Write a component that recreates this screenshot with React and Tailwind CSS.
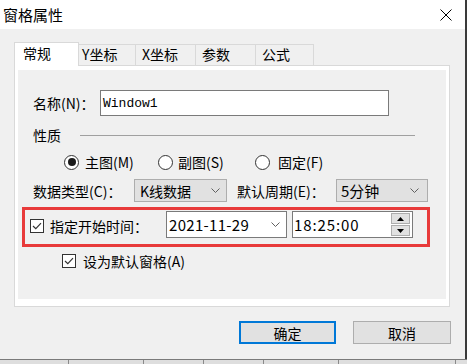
import React from 'react';

// Small drawn controls used by the dialog
const Chevron = () => (
  <svg width="9" height="5" viewBox="0 0 9 5">
    <polyline points="0.5,0.5 4.5,4.5 8.5,0.5" fill="none" stroke="#606060" strokeWidth="1" />
  </svg>
);

const Radio = ({ checked }) => (
  <span className="w-[15px] h-[15px] shrink-0 rounded-full border border-[#333333] bg-white flex items-center justify-center">
    {checked && <span className="w-[8px] h-[8px] rounded-full bg-[#1a1a1a]" />}
  </span>
);

const CheckBox = () => (
  <span className="w-[14px] h-[14px] shrink-0 border border-[#333333] bg-white flex items-center justify-center">
    <svg width="10" height="8" viewBox="0 0 10 8">
      <polyline points="1,4 3.8,6.6 9,1.2" fill="none" stroke="#333333" strokeWidth="1.2" />
    </svg>
  </span>
);

const tabs = [
  { label: '常规', cls: 'w-[65px] h-[24px] -mb-px border-l border-t border-r bg-white pl-[8px] pt-[3px] relative z-10' },
  { label: 'Y坐标', cls: 'w-[57px] h-[21px] border-t border-r pl-[3px] pt-[2px]' },
  { label: 'X坐标', cls: 'w-[60px] h-[21px] border-t border-r pl-[6px] pt-[2px]' },
  { label: '参数', cls: 'w-[60px] h-[21px] border-t border-r pl-[6px] pt-[2px]' },
  { label: '公式', cls: 'w-[58px] h-[21px] border-t border-r pl-[6px] pt-[2px]' },
];

export default function App() {
  return (
    <div className="w-[467px] h-[364px] overflow-hidden flex flex-col text-[14px] text-black leading-none font-['Noto_Sans_CJK_SC',sans-serif]">
      <div className="flex h-[359px]">
        <div className="w-[465px] flex flex-col">
          {/* Title bar */}
          <div className="h-[29px] bg-white flex items-center justify-between pl-[3px] pr-[13px]">
            <span className="text-[15px]">窗格属性</span>
            <svg width="12" height="12" viewBox="0 0 12 12">
              <path d="M0.5 0.5 L11.5 11.5 M11.5 0.5 L0.5 11.5" stroke="#000" strokeWidth="1" />
            </svg>
          </div>

          <div className="flex-1 bg-[#f0f0f0] pt-[13px]">
            {/* Tabs */}
            <div className="ml-[14px] h-[23px] flex items-end">
              {tabs.map((t) => (
                <div key={t.label} className={`${t.cls} border-[#d9d9d9] text-[14px]`}>
                  {t.label}
                </div>
              ))}
            </div>

            {/* Tab page */}
            <div className="ml-[14px] w-[436px] h-[242px] border border-[#d9d9d9] bg-white pt-[4px] px-[3px] pb-[7px]">
              <div className="h-full bg-[#f0f0f0]">
                <div className="h-[20px]" />

                <div className="flex items-center h-[26px] pl-[15px]">
                  <span className="w-[67px]">名称(N)：</span>
                  <div className="w-[289px] h-[26px] bg-white border border-[#7a7a7a] flex items-center pl-[2px]">
                    <span className="font-['Liberation_Mono',monospace] text-[13px]">Window1</span>
                  </div>
                </div>

                <div className="flex items-center h-[20px] mt-[9px] pl-[15px]">
                  <span className="w-[47px]">性质</span>
                  <div className="w-[335px] h-px bg-[#a0a0a0]" />
                </div>

                <div className="flex items-center h-[20px] mt-[7px] pl-[46px]">
                  <div className="w-[94px] flex items-center gap-[6px]">
                    <Radio checked />
                    <span>主图(M)</span>
                  </div>
                  <div className="w-[97px] flex items-center gap-[5px]">
                    <Radio />
                    <span>副图(S)</span>
                  </div>
                  <div className="flex items-center gap-[8px]">
                    <Radio />
                    <span>固定(F)</span>
                  </div>
                </div>

                <div className="flex items-center h-[23px] mt-[7px] pl-[15px]">
                  <span className="w-[101px]">数据类型(C)：</span>
                  <div className="w-[93px] h-[23px] bg-[#e1e1e1] border border-[#adadad] flex items-center justify-between pl-[5px] pr-[6px]">
                    <span>K线数据</span>
                    <Chevron />
                  </div>
                  <span className="w-[109px] pl-[10px]">默认周期(E)：</span>
                  <div className="w-[92px] h-[23px] bg-[#e1e1e1] border border-[#adadad] flex items-center justify-between pl-[4px] pr-[8px]">
                    <span className="text-[15px]">5分钟</span>
                    <Chevron />
                  </div>
                </div>

                {/* Highlighted start time row */}
                <div className="ml-[4px] mt-[5px] w-[408px] h-[40px] border-[3px] border-[#e83a3a] flex items-start pl-[5px]">
                  <div className="flex items-center gap-[6px] mt-[9px] w-[136px]">
                    <CheckBox />
                    <span>指定开始时间：</span>
                  </div>
                  <div className="mt-[1px] w-[121px] h-[27px] bg-white border border-[#7a7a7a] flex items-center justify-between pl-[2px] pr-[6px]">
                    <span className="text-[15px] tracking-[0.3px]">2021-11-29</span>
                    <Chevron />
                  </div>
                  <div className="ml-[5px] mt-[1px] w-[121px] h-[27px] bg-white border border-[#7a7a7a] flex items-center justify-between pl-[1px] pr-[2px]">
                    <span className="text-[15px] tracking-[0.9px]">18:25:00</span>
                    <div className="flex flex-col gap-px">
                      <div className="w-[19px] h-[11px] bg-[#e1e1e1] border border-[#adadad] flex items-center justify-center">
                        <svg width="7" height="4" viewBox="0 0 7 4"><polygon points="3.5,0 7,4 0,4" fill="#000" /></svg>
                      </div>
                      <div className="w-[19px] h-[11px] bg-[#e1e1e1] border border-[#adadad] flex items-center justify-center">
                        <svg width="7" height="4" viewBox="0 0 7 4"><polygon points="0,0 7,0 3.5,4" fill="#000" /></svg>
                      </div>
                    </div>
                  </div>
                </div>

                <div className="flex items-center gap-[7px] h-[20px] mt-[4px] pl-[44px]">
                  <CheckBox />
                  <span>设为默认窗格(A)</span>
                </div>
              </div>
            </div>

            {/* Buttons */}
            <div className="flex justify-end gap-[17px] mt-[14px] pr-[14px]">
              <button className="w-[97px] h-[23px] bg-[#e1e1e1] border-2 border-[#0078d7] flex items-center justify-center">
                确定
              </button>
              <button className="w-[98px] h-[23px] bg-[#e1e1e1] border border-[#adadad] flex items-center justify-center">
                取消
              </button>
            </div>
          </div>
        </div>
        <div className="w-[2px] bg-[#3a3a3a]" />
      </div>

      <div className="h-px bg-[#7a7a7a]" />
      <div className="flex-1 flex bg-[#dedede]">
        <div className="w-[69px] border-r border-[#8a8a8a]" />
        <div className="w-[75px] border-r border-[#8a8a8a]" />
        <div className="w-[60px] border-r border-[#8a8a8a]" />
        <div className="w-[60px] border-r border-[#8a8a8a]" />
        <div className="w-[75px] border-r border-[#8a8a8a]" />
        <div className="w-[117px] border-r border-[#8a8a8a]" />
        <div className="flex-1" />
      </div>
    </div>
  );
}
